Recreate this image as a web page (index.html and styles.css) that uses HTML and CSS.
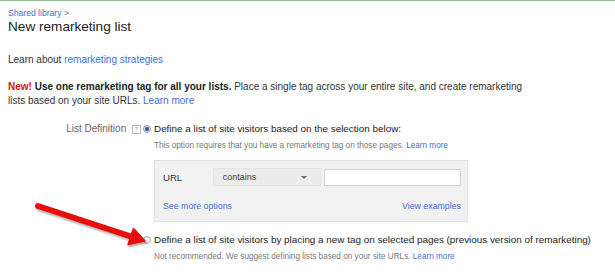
FILE: index.html
```html
<!DOCTYPE html>
<html lang="en">
  <head>
    <meta charset="UTF-8" />
    <title>New remarketing list</title>
    <link rel="stylesheet" href="styles.css">
  </head>
  <body>
    <div class="topline"></div>
    <div class="page">
      <div class="crumb"><a href="#">Shared library</a> &gt;</div>
      <h1>New remarketing list</h1>
      <p class="learn">Learn about <a href="#">remarketing strategies</a></p>
      <p class="notice">
        <span class="new">New!</span> <strong>Use one remarketing tag for all your lists.</strong>
        Place a single tag across your entire site, and create remarketing
        lists based on your site URLs. <a href="#">Learn more</a>
      </p>

      <div class="field">
        <div class="field-label">
          List Definition <span class="help">?</span>
        </div>
        <div class="field-body">
          <label class="option">
            <span class="radio checked"></span>
            Define a list of site visitors based on the selection below:
          </label>
          <div class="hint">This option requires that you have a remarketing tag on those pages. <a href="#">Learn more</a></div>

          <div class="rule-box">
            <div class="rule-row">
              <span class="rule-name">URL</span>
              <div class="select">contains <span class="caret"></span></div>
              <div class="text-input"></div>
            </div>
            <div class="rule-links">
              <a href="#">See more options</a>
              <a href="#">View examples</a>
            </div>
          </div>

          <label class="option second">
            <span class="radio"></span>
            Define a list of site visitors by placing a new tag on selected pages (previous version of remarketing)
          </label>
          <div class="hint">Not recommended. We suggest defining lists based on your site URLs. <a href="#">Learn more</a></div>
        </div>
      </div>
    </div>

    <svg class="arrow" width="130" height="60" viewBox="0 0 130 60">
      <defs>
        <filter id="shadow" x="-20%" y="-40%" width="140%" height="180%">
          <feDropShadow dx="1" dy="2" stdDeviation="1.2" flood-color="#000" flood-opacity="0.35" />
        </filter>
      </defs>
      <g filter="url(#shadow)">
        <line x1="6" y1="8" x2="99" y2="38.5" stroke="#e8100c" stroke-width="6" stroke-linecap="round" />
        <polygon points="101.5,30.5 113,43 96,46.5" fill="#e8100c" stroke="#e8100c" stroke-width="1.5" stroke-linejoin="round" />
      </g>
    </svg>
  </body>
</html>
```

FILE: styles.css
```css
body {
  margin: 0;
  font-family: "Liberation Sans", Arial, sans-serif;
  color: #222;
  background: #fff;
  position: relative;
}
a {
  color: #3d6fd6;
  text-decoration: none;
}
.topline {
  height: 1px;
  background: #8cbf8c;
}
.page {
  padding: 0 8px;
}
.crumb {
  font-size: 8.6px;
  margin-top: 7px;
  line-height: 10px;
  color: #777;
}
h1 {
  font-size: 13.6px;
  font-weight: normal;
  margin: 1px 0 0;
  line-height: 16px;
  color: #222;
}
.learn {
  font-size: 10px;
  margin: 18px 0 0;
  line-height: 14px;
  color: #333;
}
.notice {
  font-size: 10px;
  margin: 13px 0 0;
  line-height: 14px;
  color: #333;
  width: 530px;
}
.new {
  color: #dd1111;
  font-weight: bold;
}
.notice strong {
  color: #222;
}
.field {
  display: flex;
  margin-top: 14px;
}
.field-label {
  width: 133px;
  text-align: right;
  font-size: 10px;
  line-height: 14px;
  color: #666;
  white-space: nowrap;
}
.help {
  display: inline-block;
  width: 7px;
  height: 7px;
  border: 1px solid #bbb;
  font-size: 6px;
  line-height: 7px;
  text-align: center;
  color: #999;
  vertical-align: 1px;
  margin-left: 3px;
}
.field-body {
  padding-left: 2px;
}
.option {
  display: flex;
  align-items: center;
  gap: 3px;
  font-size: 9.9px;
  line-height: 14px;
  color: #222;
}
.radio {
  width: 8px;
  height: 8px;
  border-radius: 50%;
  border: 1px solid #aaa;
  background: radial-gradient(circle, #fff 0, #e4e4e4 100%);
  box-sizing: border-box;
  flex: none;
}
.radio.checked {
  background: radial-gradient(circle, #3a5f8a 0, #3a5f8a 1.8px, #dfe6ef 2.4px);
  border-color: #8a9cb5;
}
.hint {
  font-size: 8.2px;
  line-height: 12px;
  color: #777;
  margin: 4px 0 0 11px;
}
.rule-box {
  margin: 8px 0 0 11px;
  width: 314px;
  height: 62px;
  background: #f1f1f1;
  border: 1px solid #e2e2e2;
  box-sizing: border-box;
  padding: 7px 6px 0 8px;
}
.rule-row {
  display: flex;
  align-items: center;
}
.rule-name {
  width: 50px;
  font-size: 9.6px;
  color: #333;
}
.select {
  width: 109px;
  height: 18px;
  box-sizing: border-box;
  background: #ececec;
  border: 1px solid #e4e4e4;
  font-size: 9px;
  line-height: 16px;
  color: #444;
  padding-left: 9px;
  position: relative;
}
.caret {
  position: absolute;
  right: 13px;
  top: 7px;
  border-left: 3px solid transparent;
  border-right: 3px solid transparent;
  border-top: 3px solid #666;
}
.text-input {
  width: 137px;
  height: 17px;
  box-sizing: border-box;
  margin-left: 3px;
  background: #fff;
  border: 1px solid #d4d4d4;
}
.rule-links {
  display: flex;
  justify-content: space-between;
  font-size: 8.8px;
  margin-top: 15px;
}
.option.second {
  margin-top: 11px;
}
.arrow {
  position: absolute;
  left: 32px;
  top: 198px;
}
```
